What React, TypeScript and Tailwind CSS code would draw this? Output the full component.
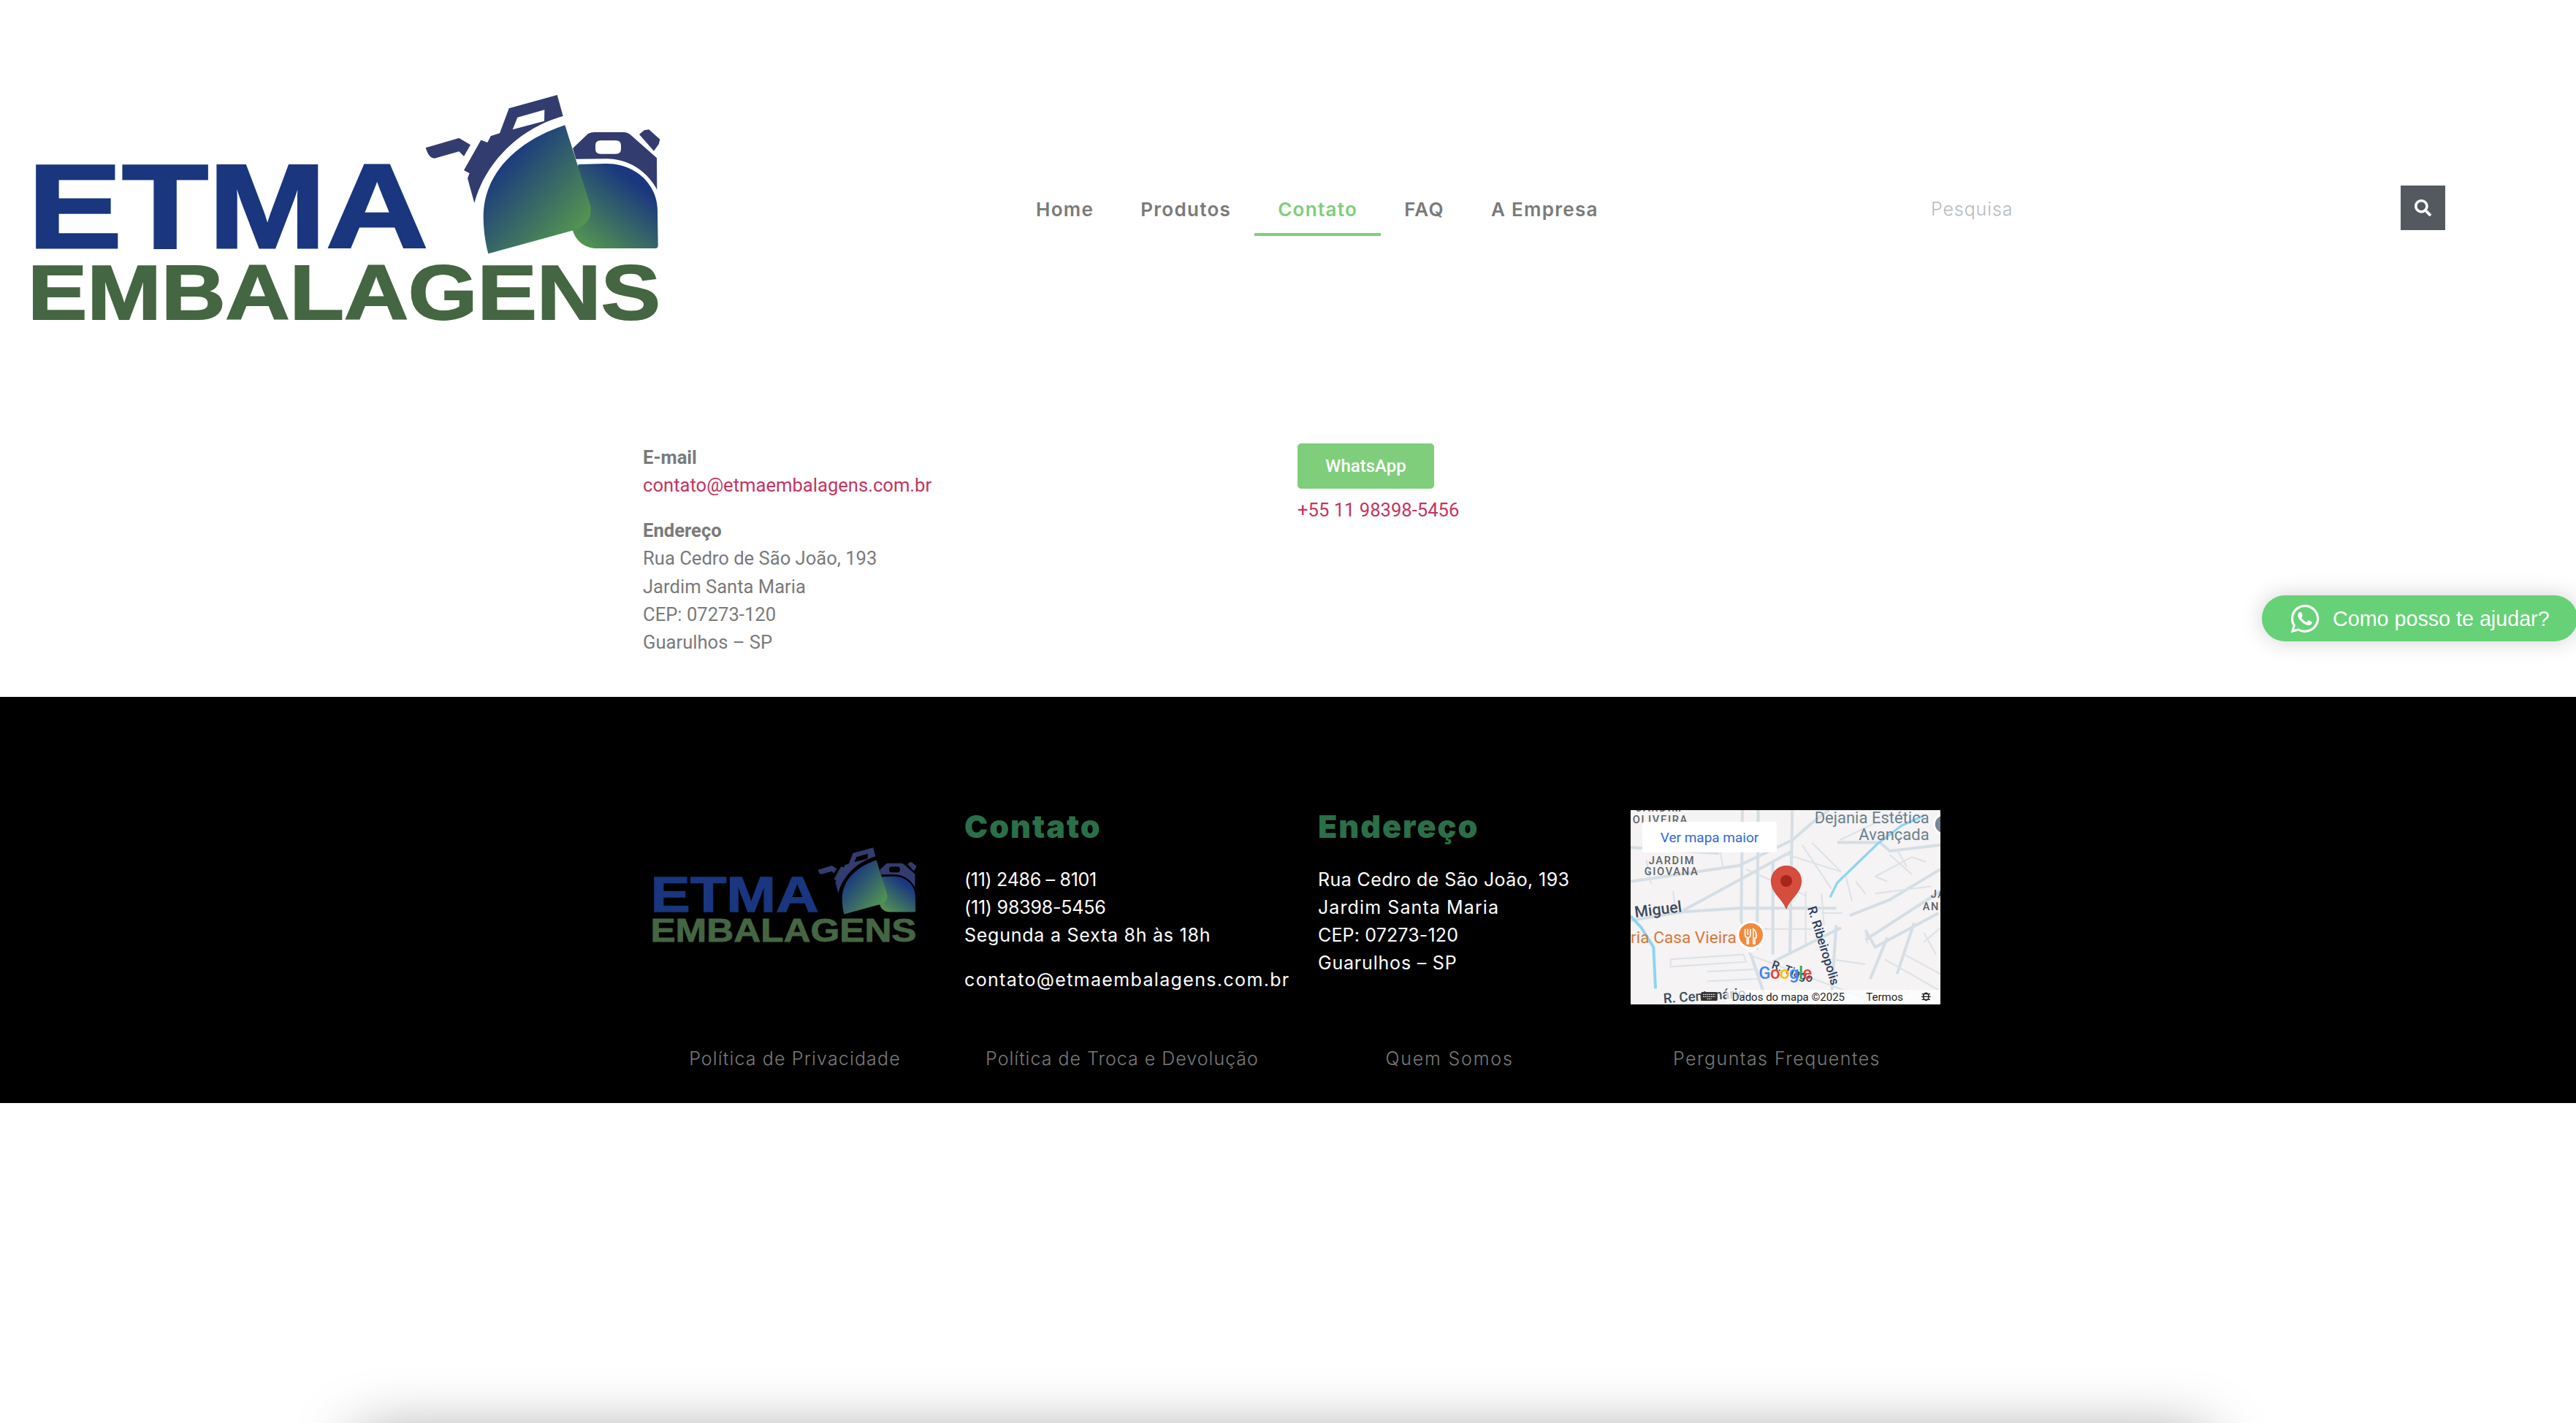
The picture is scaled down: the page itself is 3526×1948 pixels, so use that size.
import React from "react";
import { FaWhatsapp, FaSearch } from "react-icons/fa";

const navItems = ["Home", "Produtos", "Contato", "FAQ", "A Empresa"];
const footerLinks = [
  { label: "Política de Privacidade", cls: "tracking-[1.15px]" },
  { label: "Política de Troca e Devolução", cls: "tracking-[1px]" },
  { label: "Quem Somos", cls: "tracking-[1.8px]" },
  { label: "Perguntas Frequentes", cls: "tracking-[1.45px]" },
];

// coordinates follow the header logo's place on the page
function Logo({ className }: { className?: string }) {
  return (
    <svg viewBox="38 128 866 314" className={className}>
      <defs>
        <linearGradient id="bigJug" gradientUnits="userSpaceOnUse" x1="690" y1="215" x2="800" y2="315">
          <stop offset="0" stopColor="#1a377f" />
          <stop offset="1" stopColor="#55984f" />
        </linearGradient>
        <linearGradient id="smallJug" gradientUnits="userSpaceOnUse" x1="870" y1="250" x2="800" y2="342">
          <stop offset="0" stopColor="#1a377f" />
          <stop offset="1" stopColor="#55984f" />
        </linearGradient>
      </defs>
      <text x="38" y="340" fontFamily="Liberation Sans" fontWeight="700" fontSize="164" textLength="548" lengthAdjust="spacingAndGlyphs" fill="#19367f" stroke="#19367f" strokeWidth="3">ETMA</text>
      <text x="38" y="438" fontFamily="Liberation Sans" fontWeight="700" fontSize="105" textLength="866" lengthAdjust="spacingAndGlyphs" fill="#456642" stroke="#456642" strokeWidth="2">EMBALAGENS</text>
      <path fill="#323c6e" d="M582.7 203.3L628.3 190L644 199.3L635 215L628.3 208.3L595 217.7Q587 218 582.7 203.3Z" />
      <path fill="#323c6e" fillRule="evenodd" d="M762.7 131L696.7 149.3L684 183.3L671.7 187.3L667.3 196L658.3 192.7L635 234L642.7 238.3L640 245L649.3 279C665 220 715 175 770.7 160ZM708.3 161.7L745.3 151.3L745 166.7L701.7 178.3Z" />
      <path fill="#323c6e" fillRule="evenodd" d="M784 204L805 184Q809 182 813 182L853 182Q860 182 865 187.3L899 217.3L899.3 260.7C886.7 236.7 861.7 218.3 830 218.3L788.3 218.7ZM822 193.3Q815 193.3 815 200L815 205Q815 211.7 822 211.7L843 211.7Q850 211.7 850 205L850 200Q850 193.3 843 193.3Z" />
      <path fill="#323c6e" d="M875 185L881.7 179.3L888.3 178.3L903.3 191.7L901.7 198.3L895 207.7Z" />
      <path fill="url(#smallJug)" d="M791.7 226L830 225C870 225 900 253.3 900 290L900.7 336.7Q900.7 341 896.7 341L816.7 341C800 341 788 330 784 316.7L780 270Z" />
      <path fill="url(#bigJug)" d="M773.3 172.3C705 195 662 240 661.7 296.7C661.7 315 664 332 668.3 348.3L783.3 316.7C800 312 812 300 808 282Z" />
    </svg>
  );
}

const mainRoads = [
  "495,27 490,480 530,620 590,800",
  "36,320 480,255 700,150 780,80 850,27",
  "250,440 480,315 700,195",
  "36,180 400,205",
  "36,480 250,445 480,430 880,430",
  "885,160 1060,160 1100,195 1308,170",
  "1000,560 1308,360",
  "935,460 1100,395 1308,270",
  "1000,520 1040,590 1300,450",
  "880,500 860,800",
  "620,650 900,510",
  "560,27 555,600",
  "700,27 690,620",
  "620,240 620,620",
  "1200,490 1130,700",
  "1090,550 1020,720",
];
const minorRoads = [
  "755,360 755,580",
  "510,270 760,380",
  "680,210 900,280",
  "780,160 900,280",
  "740,170 860,350",
  "490,515 780,515",
  "520,620 1000,800",
  "1080,640 1308,770",
  "1240,570 1308,510",
  "1040,300 1190,220 1250,240",
  "1040,300 1090,320",
  "200,640 500,620 510,650 200,670 200,640",
  "350,690 560,680",
  "350,730 560,720",
  "210,360 220,430",
  "100,230 120,330",
  "405,200 415,260",
  "1160,620 1308,700",
  "860,640 1000,660",
  "1000,520 1008,575",
  "895,150 1060,70",
  "960,320 1000,370",
  "920,300 945,400",
  "1100,210 1190,290",
  "1130,190 1170,260",
  "1040,370 1270,340",
  "1240,530 1290,620",
  "820,450 905,450",
  "820,370 830,500",
  "1180,770 1080,825",
];

function GoogleMap() {
  return (
    <svg viewBox="36 27 1272 798" className="block h-[266px] w-[424px]">
      <rect x="36" y="27" width="1272" height="798" fill="#f5f3f4" />
      {mainRoads.map((p) => <polyline key={p} points={p} fill="none" stroke="#d5dee4" strokeWidth="12" />)}
      {minorRoads.map((p) => <polyline key={p} points={p} fill="none" stroke="#dbe2e7" strokeWidth="6" />)}
      <polyline points="855,385 885,325 1050,165 1150,90 1240,50" fill="none" stroke="#8fd5ee" strokeWidth="10" />
      <polyline points="36,462 80,510 130,590 138,760" fill="none" stroke="#8fd5ee" strokeWidth="12" />
      <g fontFamily="Roboto" textAnchor="end" fontSize="66" fill="#6c7f8e">
        <text x="1262" y="80">Dejania Estética</text>
        <text x="1262" y="150">Avançada</text>
      </g>
      <circle cx="1322" cy="85" r="40" fill="#74899a" stroke="#ffffff" strokeWidth="9" />
      <g fontFamily="Roboto" fontWeight="500" fontSize="44" fill="#5f6368" letterSpacing="5">
        <text x="58" y="34">JARDIM</text>
        <text x="44" y="82">OLIVEIRA</text>
        <text x="110" y="248">JARDIM</text>
        <text x="92" y="295">GIOVANA</text>
        <text x="1268" y="388">JA</text>
        <text x="1235" y="437">AN</text>
      </g>
      <rect x="84" y="75" width="552" height="125" rx="8" fill="#ffffff" />
      <text x="360" y="158" textAnchor="middle" fontFamily="Roboto" fontSize="57" fill="#3367d6">Ver mapa maior</text>
      <text x="55" y="468" transform="rotate(-7 55 468)" fontFamily="Roboto" fontWeight="500" fontSize="64" fill="#3c4a5c">Miguel</text>
      <text x="36" y="573" fontFamily="Roboto" fontSize="68" fill="#d9773a">ria Casa Vieira</text>
      <path d="M472 540A58 58 0 1 1 570 582L530 614L490 582A58 58 0 0 1 472 540Z" fill="#ffffff" />
      <circle cx="530" cy="540" r="49" fill="#f28a3c" />
      <path d="M506 515V540Q506 548 514 550V576H520V550Q528 548 528 540V515M517 515V540M540 576V515Q554 525 552 552H546V576Z" fill="none" stroke="#ffffff" strokeWidth="5" />
      <path d="M675 256C640 256 613 284 613 318C613 368 660 390 675 433C690 390 737 368 737 318C737 284 710 256 675 256Z" fill="#d64c3d" stroke="#b93a2d" strokeWidth="2" />
      <circle cx="675" cy="318" r="24" fill="#a5271a" />
      <text x="762" y="428" transform="rotate(73 762 428)" fontFamily="Roboto" fontWeight="500" fontSize="52" fill="#2c3e5c">R. Ribeiropolis</text>
      <text x="612" y="675" transform="rotate(20 612 675)" fontFamily="Roboto" fontWeight="500" fontSize="48" fill="#2c3e5c">R. Tiago</text>
      <text x="562" y="720" fontFamily="Roboto" fontWeight="500" fontSize="72" letterSpacing="-2">
        <tspan fill="#4285f4">G</tspan>
        <tspan fill="#ea4335">o</tspan>
        <tspan fill="#fbbc05">o</tspan>
        <tspan fill="#4285f4">g</tspan>
        <tspan fill="#34a853">l</tspan>
        <tspan fill="#ea4335">e</tspan>
      </text>
      <text x="172" y="820" transform="rotate(-4 172 820)" fontFamily="Roboto" fontWeight="500" fontSize="56" fill="#3c4a5c">R. Centenário</text>
      <rect x="430" y="765" width="878" height="60" fill="#ffffff" fillOpacity="0.72" />
      <rect x="326" y="774" width="66" height="36" rx="4" fill="#333333" />
      <path d="M334 784H384M334 793H384M350 802H368" stroke="#f5f3f4" strokeWidth="4" strokeDasharray="5 3" />
      <text x="452" y="810" fontFamily="Roboto" fontSize="45" fill="#1f1f1f">Dados do mapa ©2025</text>
      <text x="1003" y="810" fontFamily="Roboto" fontSize="45" fill="#1f1f1f">Termos</text>
      <ellipse cx="1249" cy="793" rx="11" ry="15" fill="none" stroke="#222222" strokeWidth="5" />
      <path d="M1232 782L1266 782M1230 793H1268M1232 805H1266" stroke="#222222" strokeWidth="4" />
    </svg>
  );
}

export default function App() {
  return (
    <div className="relative h-[1948px] w-[3526px] overflow-hidden bg-white">
      <header className="flex h-[568px] items-center pl-[38px]">
        <Logo className="h-[314px] w-[866px] shrink-0" />
        <nav className="ml-[482px] flex font-[Inter] text-[26px] font-semibold tracking-[1.3px] text-[#7a7a7a]">
          {navItems.map((item) => (
            <a
              key={item}
              className={
                item === "Contato"
                  ? "border-b-4 border-[#7fce7b] px-[32px] pt-[21px] pb-[13px] text-[#7fce7b]"
                  : "border-b-4 border-transparent px-[32px] pt-[21px] pb-[13px]"
              }
            >
              {item}
            </a>
          ))}
        </nav>
        <form className="mr-[179px] ml-auto flex h-[61px] w-[735px] items-center">
          <input
            placeholder="Pesquisa"
            className="h-full min-w-0 flex-1 bg-transparent pt-[3px] pl-[31px] font-[Inter] text-[25px] font-light tracking-[0.9px] outline-none placeholder:text-[#b9b9b9]"
          />
          <button type="button" className="flex h-[61px] w-[61px] items-center justify-center bg-[#54595f] text-white">
            <FaSearch className="h-[23px] w-[23px]" />
          </button>
        </form>
      </header>

      <main className="ml-[880px] grid h-[386px] grid-cols-[896px_1fr] pt-[39px] font-[Roboto] text-[25.6px] leading-[38.4px] text-[#7a7a7a]">
        <div>
          <p className="font-bold">E-mail</p>
          <p className="text-[#c33560]">contato@etmaembalagens.com.br</p>
          <p className="mt-[23px] font-bold">Endereço</p>
          <p>Rua Cedro de São João, 193</p>
          <p>Jardim Santa Maria</p>
          <p>CEP: 07273-120</p>
          <p>Guarulhos – SP</p>
        </div>
        <div>
          <a className="flex h-[62px] w-[187px] items-center justify-center rounded-[5px] bg-[#7fce7b] text-[24px] font-medium text-white">
            WhatsApp
          </a>
          <p className="mt-[10px] text-[#c33560]">+55 11 98398-5456</p>
        </div>
      </main>

      <footer className="h-[556px] bg-black pt-[155px] font-[Inter] text-[25px] leading-[38px] text-white">
        <div className="ml-[864px] w-[1792px]">
          <div className="grid h-[266px] grid-cols-[456px_484px_428px_424px]">
            <div className="pt-[50px] pl-[26px]">
              <Logo className="h-[132px] w-[365px]" />
            </div>
            <div>
              <h2 className="-mt-[3px] mb-[29px] text-[43px] leading-[50px] font-black tracking-[2px] text-[#2a6f49]">Contato</h2>
              <p className="tracking-[-0.3px]">(11) 2486 – 8101</p>
              <p className="tracking-[-0.2px]">(11) 98398-5456</p>
              <p className="tracking-[0.75px]">Segunda a Sexta 8h às 18h</p>
              <p className="mt-[23px] tracking-[1.35px]">contato@etmaembalagens.com.br</p>
            </div>
            <div>
              <h2 className="-mt-[3px] mb-[29px] text-[43px] leading-[50px] font-black tracking-[2px] text-[#2a6f49]">Endereço</h2>
              <p className="tracking-[0.4px]">Rua Cedro de São João, 193</p>
              <p className="tracking-[1.1px]">Jardim Santa Maria</p>
              <p className="tracking-[0.15px]">CEP: 07273-120</p>
              <p className="tracking-[0.8px]">Guarulhos – SP</p>
            </div>
            <GoogleMap />
          </div>
          <div className="mt-[55px] grid grid-cols-4 text-center font-light text-[#7a7a7a]">
            {footerLinks.map((link) => (
              <a key={link.label} className={link.cls}>{link.label}</a>
            ))}
          </div>
        </div>
      </footer>

      <a className="absolute top-[815px] -right-[2px] flex h-[63px] w-[432px] items-center rounded-full bg-[#66d176] pl-[37px] font-['Liberation_Sans'] text-[28.7px] text-white shadow-[0_0_30px_rgba(0,0,0,0.18)]">
        <FaWhatsapp className="h-[44px] w-[44px] shrink-0" />
        <span className="ml-[16px] pt-[2px]">Como posso te ajudar?</span>
      </a>

      <div className="absolute top-[1965px] left-[490px] h-[100px] w-[2530px] shadow-[0_0_85px_rgba(0,0,0,0.4)]" />
    </div>
  );
}
